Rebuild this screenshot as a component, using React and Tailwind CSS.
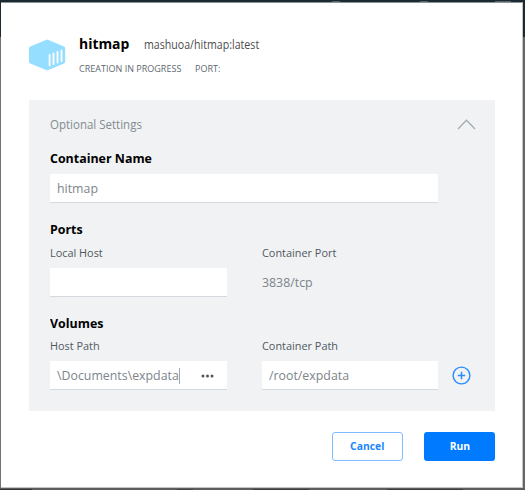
const titleClass =
  "h-5 w-fit origin-left scale-x-[0.955] text-[13px] leading-5 font-bold text-black whitespace-nowrap";
const labelClass = "h-4 w-fit origin-left scale-x-[0.99] text-[11px] leading-4 text-[#51585e] whitespace-nowrap";
const fieldClass =
  "flex h-[29px] items-center border-b border-[#d3d9de] bg-white px-[7px] pt-px text-[13px] text-[#7d858b] whitespace-nowrap";
const valueClass = "origin-left scale-x-[0.95]";

function ContainerIcon() {
  return (
    <svg width="37" height="32" viewBox="0 0 37 32" className="mt-px shrink-0">
      <path
        d="M17 .9q1.200-.6 2.400 0L35 7.400q1.200.6 1.200 1.900v13.400q0 1.200-1.200 1.800L19.400 31q-1.200.5-2.400 0L1.200 24.500Q0 23.900 0 22.700V9.300Q0 8 1.200 7.400Z"
        fill="#96deff"
      />
      <path
        d="M20.600 15.800v10.600M24.500 14.400v10.600M28.500 13v10.500M32.500 11.500v10.500"
        stroke="#fff"
        strokeWidth="1.800"
        strokeLinecap="round"
      />
    </svg>
  );
}

export default function App() {
  return (
    <div className="flex h-[490px] w-[525px] flex-col overflow-hidden bg-[#1b2a31] font-['Open_Sans','Noto_Sans',sans-serif]">
      <div className="flex h-[2px] shrink-0 items-end bg-[#1b2a31]">
        <div className="ml-[332px] h-px w-2 bg-[#59646a]" />
        <div className="ml-[80px] h-px w-2 bg-[#59646a]" />
        <div className="ml-[67px] h-px w-4 bg-[#59646a]" />
      </div>
      <div className="flex h-[486px] shrink-0">
        <div className="flex w-px flex-col">
          <div className="h-[35px] bg-[#1b2a31]" />
          <div className="flex-1 bg-[#737373]" />
        </div>
        <main className="flex w-[522px] flex-col border-t border-r border-b border-t-[#8b9599] border-r-[#c4c4c4] border-b-[#c4c4c4] bg-white pl-7">
          <header className="flex h-[97px] pt-[35px]">
            <ContainerIcon />
            <div className="-mt-[6px] ml-[13px]">
              <div className="flex h-6 items-center whitespace-nowrap">
                <div className="w-[65px]">
                  <h1 className="w-fit origin-left scale-x-[0.96] text-[14.5px] leading-6 font-bold text-black">hitmap</h1>
                </div>
                <span className="mt-px origin-left scale-x-[0.885] text-[12px] leading-6 text-[#4d4d4d]">
                  mashuoa/hitmap:latest
                </span>
              </div>
              <div className="mt-[5px] flex h-4 text-[9.5px] leading-4 text-[#5f696f] whitespace-nowrap">
                <div className="w-[116px]">
                  <div className="w-fit origin-left scale-x-[0.95]">CREATION IN PROGRESS</div>
                </div>
                <div className="origin-left scale-x-[0.95]">PORT:</div>
              </div>
            </div>
          </header>
          <section className="h-[311px] w-[466px] bg-[#f0f2f4] pt-[14px] pr-[19px] pl-[21px]">
            <div className="flex h-5 items-center justify-between">
              <span className="mt-[2px] origin-left scale-x-[0.92] text-[12.5px] text-[#838c91]">Optional Settings</span>
              <svg width="19" height="11" viewBox="0 0 19 11" fill="none" stroke="#a2adb4" strokeWidth="1.300">
                <path d="M1 10 9.500 1.200 18 10" />
              </svg>
            </div>
            <h2 className={`${titleClass} mt-[14px]`}>Container Name</h2>
            <div className={`${fieldClass} mt-[6px] w-[388px]`}>
              <span className={valueClass}>hitmap</span>
            </div>
            <h2 className={`${titleClass} mt-[16px]`}>Ports</h2>
            <div className="mt-[6px] flex">
              <div className="w-[212px]">
                <div className={labelClass}>Local Host</div>
                <div className={`${fieldClass} mt-[7px] w-[177px]`} />
              </div>
              <div>
                <div className={labelClass}>Container Port</div>
                <div className="mt-[7px] flex h-[28px] items-center pt-px text-[13px] text-[#7d858b]">
                  <span className={valueClass}>3838/tcp</span>
                </div>
              </div>
            </div>
            <h2 className={`${titleClass} mt-[16px]`}>Volumes</h2>
            <div className="mt-[5px] flex">
              <div className="w-[212px]">
                <div className={labelClass}>Host Path</div>
                <div className={`${fieldClass} mt-[7px] w-[177px]`}>
                  <div className="flex w-[123px] items-center">
                    <span className={`${valueClass} w-[122px]`}>\Documents\expdata</span>
                    <span className="h-4 w-px shrink-0 bg-[#a0a5a9]" />
                  </div>
                  <svg width="13" height="4" viewBox="0 0 13 4" fill="#555" className="mr-[6px] ml-auto">
                    <circle cx="2" cy="2" r="1.500" />
                    <circle cx="6.500" cy="2" r="1.500" />
                    <circle cx="11" cy="2" r="1.500" />
                  </svg>
                </div>
              </div>
              <div>
                <div className={labelClass}>Container Path</div>
                <div className="mt-[7px] flex items-center">
                  <div className={`${fieldClass} w-[176px]`}>
                    <span className={valueClass}>/root/expdata</span>
                  </div>
                  <svg width="19" height="19" viewBox="0 0 19 19" fill="none" stroke="#2a8cff" className="ml-[13.500px]">
                    <circle cx="9.500" cy="9.500" r="8.400" strokeWidth="1.400" />
                    <path d="M9.500 5.800v7.400M5.800 9.500h7.400" strokeWidth="1.500" />
                  </svg>
                </div>
              </div>
            </div>
          </section>
          <footer className="mt-[21px] flex w-[466px] justify-end gap-[21px] text-[11px] font-bold">
            <button className="h-[29px] w-[71px] rounded-[3px] border border-[#7fbcff] bg-white text-[#2186ff]">
              <span className="inline-block scale-x-[0.94]">Cancel</span>
            </button>
            <button className="h-[29px] w-[71px] rounded-[3px] bg-[#007bff] text-white">
              <span className="inline-block scale-x-[0.94]">Run</span>
            </button>
          </footer>
        </main>
        <div className="flex w-[2px] flex-col">
          <div className="h-[35px] bg-[#1b2a31]" />
          <div className="flex-1 bg-[#666]" />
        </div>
      </div>
      <div className="flex h-[2px] shrink-0 items-end bg-[#5c5c5c]">
        <div className="h-px w-8 bg-[#333]" />
        <div className="ml-[145px] h-px w-4 bg-[#444]" />
        <div className="ml-[60px] h-px w-14 bg-[#3c3c3c]" />
        <div className="ml-[78px] h-px w-[76px] bg-[#3c3c3c]" />
      </div>
    </div>
  );
}
